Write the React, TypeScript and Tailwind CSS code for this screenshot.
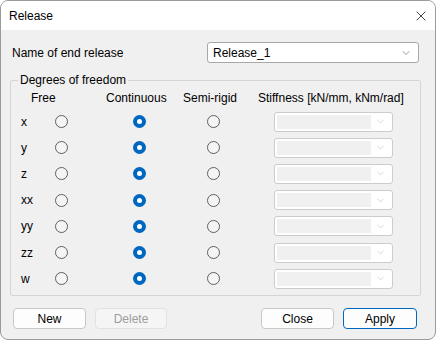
import { X, ChevronDown } from "lucide-react";

const rows = ["x", "y", "z", "xx", "yy", "zz", "w"];

const Radio = ({ checked }: { checked?: boolean }) =>
  checked ? (
    <span className="flex h-[13px] w-[13px] items-center justify-center rounded-full bg-[#0067c0]">
      <span className="h-[5px] w-[5px] rounded-full bg-white" />
    </span>
  ) : (
    <span className="block h-[13px] w-[13px] rounded-full border border-[#5f5f5f] bg-[#f5f5f5]" />
  );

const DisabledCombo = () => (
  <div className="flex h-[20px] w-[119px] items-center rounded-[3px] border border-[#cccccc] bg-white p-[2px]">
    <div className="h-full flex-1 bg-[#f0f0f0]" />
    <ChevronDown className="mx-[4px] h-[11px] w-[11px] text-[#b5b5b5]" strokeWidth={1.2} />
  </div>
);

const App = () => {
  return (
    <div className="h-[341px] w-[437px] bg-white font-['Liberation_Sans',Arial,sans-serif] text-[12px] text-black">
      <div className="flex h-[340px] w-[436px] flex-col overflow-hidden rounded-[8px] border border-[#9a9a9a] bg-[#f0f0f0]">
        {/* Title bar */}
        <div className="flex h-[29px] items-center justify-between bg-white pl-[8px] pr-[6px]">
          <span className="text-[12px]">Release</span>
          <X className="h-[16px] w-[16px]" strokeWidth={1.1} />
        </div>

        {/* Name row */}
        <div className="mt-[12px] flex items-center justify-between pl-[11px] pr-[16px]">
          <span>Name of end release</span>
          <div className="flex h-[21px] w-[212px] items-center justify-between rounded-[3px] border border-[#a8a8a8] bg-white pl-[5px] pr-[6px]">
            <span>Release_1</span>
            <ChevronDown className="h-[12px] w-[12px] text-[#555]" strokeWidth={1.2} />
          </div>
        </div>

        {/* Degrees of freedom */}
        <fieldset className="mx-[9px] mt-[9px] h-[224px] w-[411px] rounded-[2px] border border-[#d5d5d5] pl-[10px]">
          <legend className="ml-[-3px] px-[2px] leading-[16px]">Degrees of freedom</legend>
          <div className="mt-[1px] flex h-[18px] items-center pl-[10px]">
            <span className="w-[75px]">Free</span>
            <span className="w-[77px]">Continuous</span>
            <span className="w-[75px]">Semi-rigid</span>
            <span>Stiffness [kN/mm, kNm/rad]</span>
          </div>
          <div className="mt-[1.5px] flex flex-col">
            {rows.map((r) => (
              <div key={r} className="flex h-[26.2px] items-center">
                <span className="w-[34px]">{r}</span>
                <Radio />
                <span className="ml-[65px]">
                  <Radio checked />
                </span>
                <span className="ml-[61px]">
                  <Radio />
                </span>
                <span className="ml-[54px]">
                  <DisabledCombo />
                </span>
              </div>
            ))}
          </div>
        </fieldset>

        {/* Buttons */}
        <div className="mt-[12px] flex items-center pl-[12px] pr-[18px]">
          <button className="h-[21px] w-[73px] rounded-[4px] border border-[#c8c8c8] bg-[#fdfdfd]">New</button>
          <button className="ml-[9px] h-[21px] w-[72px] rounded-[4px] border border-[#e2e2e2] bg-[#f5f5f5] text-[#9d9d9d]">
            Delete
          </button>
          <div className="flex-1" />
          <button className="h-[21px] w-[73px] rounded-[4px] border border-[#c8c8c8] bg-[#fdfdfd]">Close</button>
          <button className="ml-[9px] h-[21px] w-[74px] rounded-[4px] border border-[#0067c0] bg-[#fdfdfd]">
            Apply
          </button>
        </div>
      </div>
    </div>
  );
};

export default App;
